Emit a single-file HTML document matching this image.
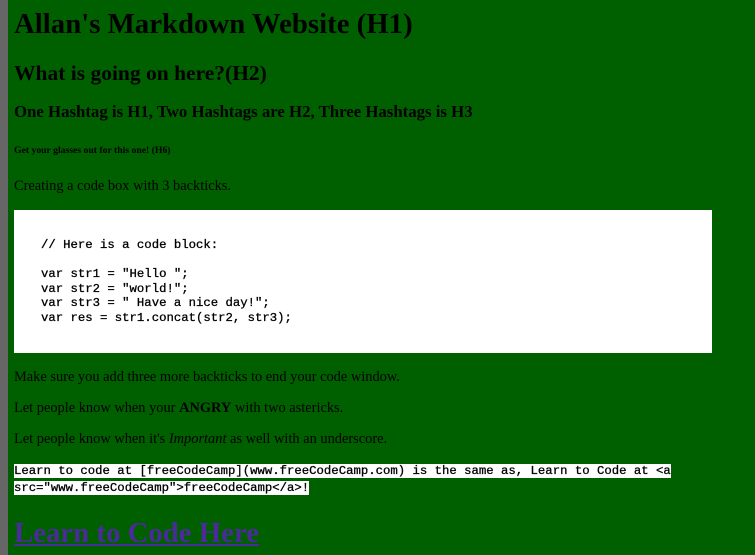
<!DOCTYPE html>
<html><head><meta charset="utf-8"><style>
html,body{margin:0;padding:0;}
body{width:755px;height:555px;background:#006000;position:relative;overflow:hidden;font-family:"Liberation Serif",serif;color:#000;}
.bar{position:absolute;left:0;top:0;width:8px;height:555px;background:#666;}
.t{position:absolute;left:14px;white-space:nowrap;margin:0;}
.code{position:absolute;left:14px;top:210px;width:698px;height:143px;background:#fff;}
.code pre{position:absolute;left:27px;top:28px;margin:0;font-family:"Liberation Mono",monospace;font-size:12.3px;line-height:14.5px;color:#000;-webkit-text-stroke:0.3px #000;}
.ic{font-family:"Liberation Mono",monospace;font-size:12.3px;background:#fff;line-height:16px;-webkit-text-stroke:0.3px #000;}
.p{font-size:14.4px;line-height:17px;}
</style></head><body>
<div class="bar"></div>
<div class="t" style="top:6px;font-size:28.8px;font-weight:bold;line-height:36px;">Allan's Markdown Website (H1)</div>
<div class="t" style="top:59px;font-size:21.5px;font-weight:bold;line-height:28px;">What is going on here?(H2)</div>
<div class="t" style="top:102px;font-size:16.8px;font-weight:bold;line-height:20px;">One Hashtag is H1, Two Hashtags are H2, Three Hashtags is H3</div>
<div class="t" style="top:145px;font-size:9.7px;font-weight:bold;line-height:12px;">Get your glasses out for this one! (H6)</div>
<div class="t p" style="top:178px;">Creating a code box with 3 backticks.</div>
<div class="code"><pre>// Here is a code block:

var str1 = "Hello ";
var str2 = "world!";
var str3 = " Have a nice day!";
var res = str1.concat(str2, str3);</pre></div>
<div class="t p" style="top:369px;">Make sure you add three more backticks to end your code window.</div>
<div class="t p" style="top:400px;">Let people know when your <b>ANGRY</b> with two astericks.</div>
<div class="t p" style="top:431px;">Let people know when it's <i>Important</i> as well with an underscore.</div>
<div class="t" style="top:462px;line-height:16px;"><span class="ic">Learn to code at [freeCodeCamp](www.freeCodeCamp.com) is the same as, Learn to Code at &lt;a</span><br><span class="ic">src="www.freeCodeCamp"&gt;freeCodeCamp&lt;/a&gt;!</span></div>
<div class="t" style="top:515px;font-size:28.8px;font-weight:bold;line-height:36px;color:#4b2a9a;text-decoration:underline;">Learn to Code Here</div>
</body></html>
